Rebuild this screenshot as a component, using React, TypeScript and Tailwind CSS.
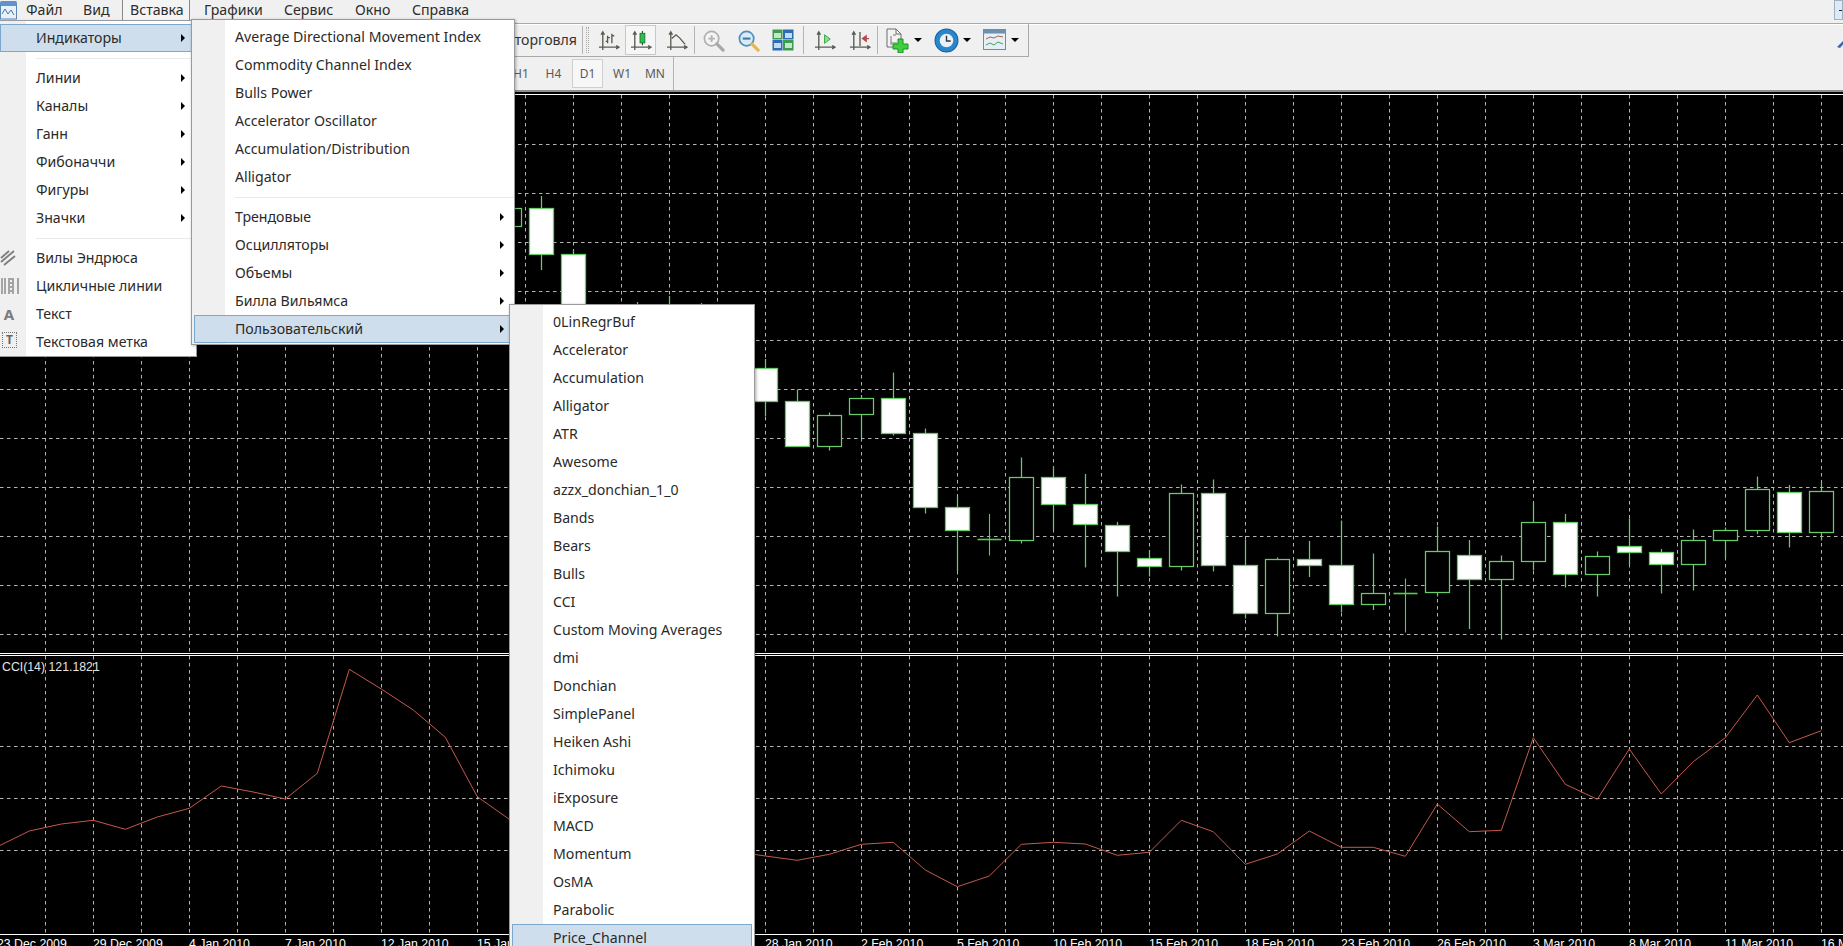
import React from "react";

const FONT = "[font-family:'Noto_Sans','Open_Sans',sans-serif]";

type C = [number, number, number, number, number, boolean];
// k index, wickTop, bodyTop, bodyBottom, wickBottom, white body
const candles: C[] = [
  [13, 200, 208.5, 226.5, 235, false],
  [14, 196, 208.5, 254.5, 270, true],
  [15, 250, 254.5, 330, 340, true],
  [17, 302, 320, 340, 350, false],
  [18, 296, 320, 340, 350, true],
  [19, 303, 320, 340, 350, false],
  [21, 359, 368.5, 401.5, 416.5, true],
  [22, 389.5, 401.5, 446.5, 447, true],
  [23, 412.5, 415.5, 446.5, 450.5, false],
  [24, 395, 398.5, 414.5, 438, false],
  [25, 372.5, 398.5, 433.5, 435.5, true],
  [26, 428.5, 433.5, 507.5, 513.5, true],
  [27, 496.5, 507.5, 530.5, 571.5, true],
  [28, 514, 539.5, 539.5, 555.5, false],
  [29, 457.5, 477.5, 540.5, 543.5, false],
  [30, 466.5, 477.5, 504.5, 530.5, true],
  [31, 474, 504.5, 524.5, 567.5, true],
  [32, 522, 525.5, 551.5, 596.5, true],
  [33, 550, 558.5, 566.5, 576.5, true],
  [34, 484.5, 493.5, 566.5, 570.5, false],
  [35, 479.5, 493.5, 565.5, 571.5, true],
  [36, 539.5, 565.5, 613.5, 618.5, true],
  [37, 557.5, 559.5, 613.5, 636.5, false],
  [38, 541, 559.5, 565.5, 577, true],
  [39, 520.5, 565.5, 604.5, 612.5, true],
  [40, 553.5, 593.5, 604.5, 610, false],
  [41, 578.5, 593.5, 593.5, 632.5, false],
  [42, 526.5, 551.5, 592.5, 596.5, false],
  [43, 540, 555.5, 579.5, 629, true],
  [44, 555.5, 561.5, 579.5, 639.5, false],
  [45, 502.5, 522.5, 561.5, 570.5, false],
  [46, 514, 522.5, 574.5, 587.5, true],
  [47, 551.5, 556.5, 574.5, 596.5, false],
  [48, 518.5, 546.5, 552.5, 564.5, true],
  [49, 549, 552.5, 564.5, 593.5, true],
  [50, 529.5, 540.5, 564.5, 590.5, false],
  [51, 527.5, 530.5, 540.5, 558.5, false],
  [52, 476.5, 489.5, 530.5, 534, false],
  [53, 485, 492.5, 532.5, 547.5, true],
  [54, 482, 491.5, 532.5, 540.5, false],
];

const cciLeft = "-2.7,846.7 29.3,831 61.3,824 93.3,820.3 125.3,829.3 157.3,817 189.3,808.3 221.3,786 253.3,792 285.3,799 317.3,773.3 349.3,669.3 381.3,689 413.3,710 445.3,737.3 477.3,796.7 509.3,819.3";
const cciRight = "755,854.5 765.3,856 797.3,860.3 829.3,854.3 861.3,844.3 893.3,842.3 925.3,870 957.3,886.7 989.3,876 1021.3,844.3 1053.3,842.3 1085.3,844 1117.3,855.3 1149.3,852.3 1181.3,820.3 1213.3,831.7 1245.3,864.3 1277.3,854 1309.3,831 1341.3,847.3 1373.3,847.3 1405.3,856.3 1437.3,804 1469.3,831.7 1501.3,830.3 1533.3,737.7 1565.3,784.3 1597.3,799.3 1629.3,749 1661.3,794 1693.3,761.7 1725.3,737.7 1757.3,695 1789.3,742.7 1821.3,730.7";

const verticals = Array.from({ length: 38 }, (_, i) => 45.5 + 48 * i);
const upperH = [144.5, 193.5, 242.5, 291.5, 340.5, 389.5, 438.5, 487.5, 536.5, 585.5, 634.5];
const lowerH = [746.5, 798.5, 850.5];

const dates = ["23 Dec 2009", "29 Dec 2009", "4 Jan 2010", "7 Jan 2010", "12 Jan 2010", "15 Jan 2010", "20 Jan 2010", "25 Jan 2010", "28 Jan 2010", "2 Feb 2010", "5 Feb 2010", "10 Feb 2010", "15 Feb 2010", "18 Feb 2010", "23 Feb 2010", "26 Feb 2010", "3 Mar 2010", "8 Mar 2010", "11 Mar 2010", "16 Mar 2010"];

function Grid({ hs, y1, y2 }: { hs: number[]; y1: number; y2: number }) {
  return (
    <g stroke="#b4b4b4" strokeWidth="1" strokeDasharray="3.5 3.5">
      {verticals.map((x) => <line key={x} x1={x} x2={x} y1={y1} y2={y2} />)}
      {hs.map((y) => <line key={y} x1={0} x2={1843} y1={y} y2={y} />)}
    </g>
  );
}

function Candle({ c }: { c: C }) {
  const [k, wt, bt, bb, wb, white] = c;
  const center = 93.5 + 32 * k;
  if (bt === bb) {
    return (
      <g stroke="#4fd04f" strokeWidth="1.1">
        <line x1={center} x2={center} y1={wt} y2={wb} />
        <line x1={center - 12} x2={center + 12} y1={bt} y2={bt} strokeWidth="1.6" />
      </g>
    );
  }
  return (
    <g stroke="#68cc68" strokeWidth="1.25">
      <line x1={center} x2={center} y1={wt} y2={wb} />
      <rect x={center - 12} y={bt} width={24} height={bb - bt} fill={white ? "#ffffff" : "#000000"} />
    </g>
  );
}

function Arrow() {
  return <span className="w-0 h-0 border-y-[4px] border-y-transparent border-l-[4px] border-l-black" />;
}

function Sep({ pad }: { pad: string }) {
  return (
    <div className={`h-[12px] flex items-center ${pad}`}>
      <div className="h-px w-full bg-[#e9e9e9]" />
    </div>
  );
}

function Item({ label, arrow, active, icon, textPad, arrowPad, mx }: { label: string; arrow?: boolean; active?: boolean; icon?: React.ReactNode; textPad: string; arrowPad?: string; mx?: string }) {
  return (
    <div className={`relative h-[28px] flex items-center justify-between ${textPad} ${arrowPad ?? ""} ${mx ?? ""} ${active ? "bg-[#cfdeec] outline outline-1 -outline-offset-1 outline-[#7ea8cb]" : ""}`}>
      {icon}
      <span className="text-[14.15px] leading-none text-[#2a2a2a] whitespace-nowrap">{label}</span>
      {arrow && <Arrow />}
    </div>
  );
}

function GutterIcon({ children }: { children: React.ReactNode }) {
  return (
    <svg viewBox="0 0 20 20" className="absolute left-0 top-[4px] w-[20px] h-[20px]" fill="none">
      {children}
    </svg>
  );
}

function Axes() {
  return (
    <path d="M5 2V21M3.2 5 5 2 6.8 5M1 18H22M19 16.2 22 18 19 19.8" stroke="#565c52" strokeWidth="1.4" fill="none" />
  );
}

function ToolSep() {
  return <div className="w-px h-[28px] bg-[#b4b4b4] shrink-0" />;
}

function Btn({ children, w, selected }: { children: React.ReactNode; w: string; selected?: boolean }) {
  return (
    <div className={`${w} h-[30px] flex items-center justify-center shrink-0 ${selected ? "bg-[#f6f6f6] border border-[#c8c8c8]" : ""}`}>
      {children}
    </div>
  );
}

function Drop() {
  return <span className="w-0 h-0 border-x-[4px] border-x-transparent border-t-[4px] border-t-black shrink-0" />;
}

function TF({ t, w, selected }: { t: string; w: string; selected?: boolean }) {
  return (
    <div className={`${w} h-[29px] flex items-center justify-center text-[12px] text-[#5a5a5a] shrink-0 ${selected ? "bg-[#f7f7f7] border border-[#cfcfcf]" : ""}`}>
      {t}
    </div>
  );
}

function MenuTop({ t, w, pl, active }: { t: string; w: string; pl: string; active?: boolean }) {
  return (
    <div className={`${w} ${pl} h-[20px] flex items-center text-[14.15px] text-[#2c2c2c] shrink-0 ${active ? "border-x border-[#8a8a8a] bg-[#f4f4f4]" : ""}`}>
      {t}
    </div>
  );
}

export default function App() {
  const custom = ["0LinRegrBuf", "Accelerator", "Accumulation", "Alligator", "ATR", "Awesome", "azzx_donchian_1_0", "Bands", "Bears", "Bulls", "CCI", "Custom Moving Averages", "dmi", "Donchian", "SimplePanel", "Heiken Ashi", "Ichimoku", "iExposure", "MACD", "Momentum", "OsMA", "Parabolic"];
  return (
    <div className={`relative w-[1843px] h-[946px] overflow-hidden bg-[#f0f0f0] flex flex-col ${FONT}`}>
      {/* menu bar */}
      <div className="h-[23px] flex items-start shrink-0">
        <svg viewBox="0 0 18 20" className="w-[18px] h-[20px] shrink-0">
          <rect x="0.5" y="3" width="16" height="16" fill="#e8f1fa" stroke="#5a86b5" />
          <rect x="0.5" y="1" width="16" height="5" fill="#5f93c9" />
          <path d="M2 14 5 9 8 14 11 10 14 15" stroke="#3f7d8f" strokeWidth="1" fill="none" />
        </svg>
        <MenuTop t="Файл" w="w-[57px]" pl="pl-[8px]" />
        <MenuTop t="Вид" w="w-[47px]" pl="pl-[8px]" />
        <MenuTop t="Вставка" w="w-[68px]" pl="pl-[7px]" active />
        <MenuTop t="Графики" w="w-[86px]" pl="pl-[14px]" />
        <MenuTop t="Сервис" w="w-[71px]" pl="pl-[8px]" />
        <MenuTop t="Окно" w="w-[57px]" pl="pl-[8px]" />
        <MenuTop t="Справка" w="w-[80px]" pl="pl-[8px]" />
        <div className="ml-auto w-[9px] h-[20px] bg-[#dde9f6] border border-[#9fb0c2] flex items-center justify-end">
          <div className="w-[3px] h-px bg-[#222]" />
        </div>
      </div>

      {/* toolbar row 1 */}
      <div className="h-[34px] shrink-0 border-t border-[#a9a9a9] shadow-[inset_0_1px_0_#ffffff] flex items-center relative">
        <div className="flex items-center h-full border-b border-r border-[#a9a9a9]">
          <div className="w-[577px] text-right text-[14.15px] text-[#333] whitespace-nowrap shrink-0">Автоторговля</div>
          <div className="ml-[5px]"><ToolSep /></div>
          <div className="ml-[3px] w-[3px] h-[26px] border-x border-dotted border-[#a8a8a8] shrink-0" />
          <div className="ml-[3px]" />
          <Btn w="w-[33px]">
            <svg viewBox="0 0 23 22" className="w-[22px] h-[21px]"><Axes /><path d="M10 6v8M10 8h2.5M10 12H8M14.5 4v10M14.5 6H17" stroke="#565c52" strokeWidth="1.4" fill="none" /></svg>
          </Btn>
          <Btn w="w-[31px]" selected>
            <svg viewBox="0 0 23 22" className="w-[22px] h-[21px]"><Axes /><path d="M13 1v15" stroke="#333" strokeWidth="1.1" /><rect x="10.5" y="3.5" width="5" height="10" fill="#27c24a" stroke="#1d7a36" /></svg>
          </Btn>
          <div className="w-[4px]" />
          <Btn w="w-[34px]">
            <svg viewBox="0 0 23 22" className="w-[22px] h-[21px]"><Axes /><path d="M6 9 10.5 5 14.5 8.5 20 15" stroke="#565c52" strokeWidth="1.4" fill="none" /></svg>
          </Btn>
          <ToolSep />
          <div className="w-[1px]" />
          <Btn w="w-[35px]">
            <svg viewBox="0 0 24 24" className="w-[23px] h-[23px]" fill="none"><circle cx="10" cy="10" r="7.5" fill="#f4f4f4" stroke="#b0b0b0" strokeWidth="1.8" /><path d="M6.5 10h7M10 6.5v7" stroke="#b4b4b4" strokeWidth="2" /><path d="M15.5 15.5 22 22" stroke="#a8a8a8" strokeWidth="3.4" strokeLinecap="round" /></svg>
          </Btn>
          <Btn w="w-[35px]">
            <svg viewBox="0 0 24 24" className="w-[23px] h-[23px]" fill="none"><circle cx="10" cy="10" r="7.5" fill="#d8ebf7" stroke="#4d8fbe" strokeWidth="1.8" /><path d="M6 10h8" stroke="#44789f" strokeWidth="2.2" /><path d="M15.5 15.5 22 22" stroke="#e2b855" strokeWidth="3.4" strokeLinecap="round" /></svg>
          </Btn>
          <Btn w="w-[34px]">
            <svg viewBox="0 0 22 22" className="w-[22px] h-[22px]"><rect x="0.5" y="0.5" width="10" height="10" fill="#3f9a52" /><rect x="11" y="0.5" width="10.5" height="10" fill="#2c6db5" /><rect x="0.5" y="11" width="10" height="10.5" fill="#2c6db5" /><rect x="11" y="11" width="10.5" height="10.5" fill="#3f9a52" /><rect x="2" y="4" width="7" height="5" fill="#c6e6c9" /><rect x="13" y="4" width="7" height="5" fill="#c4dcf2" /><rect x="2" y="14" width="7" height="5" fill="#c4dcf2" /><rect x="13" y="14" width="7" height="5" fill="#c6e6c9" /></svg>
          </Btn>
          <div className="w-[3px]" />
          <ToolSep />
          <div className="w-[3px]" />
          <Btn w="w-[35px]">
            <svg viewBox="0 0 23 22" className="w-[22px] h-[21px]"><Axes /><path d="M11 5v9l6-4.5z" fill="#8fdc8f" stroke="#3aa648" /></svg>
          </Btn>
          <Btn w="w-[35px]">
            <svg viewBox="0 0 23 22" className="w-[22px] h-[21px]"><Axes /><path d="M11.5 2v15" stroke="#565c52" strokeWidth="1.4" /><path d="M21 9h-5M18 6l-4 3 4 3z" stroke="#b5484a" strokeWidth="1.2" fill="#b5484a" /></svg>
          </Btn>
          <ToolSep />
          <div className="w-[5px]" />
          <Btn w="w-[27px]">
            <svg viewBox="0 0 26 26" className="w-[26px] h-[26px]"><path d="M3 2h9l5 5v13H3z" fill="#f3f3f3" stroke="#6d6d6d" /><path d="M12 2v5h5" fill="none" stroke="#6d6d6d" /><path d="M7 9v9M7 16h6M9 8h3" stroke="#777" strokeWidth="1" /><path d="M14 12h5v5h5v5h-5v4h-5v-4H9v-5h5z" fill="#3fcf3f" stroke="#1f8f2a" /></svg>
          </Btn>
          <div className="w-[4px]" /><Drop />
          <div className="w-[11px]" />
          <Btn w="w-[26px]">
            <svg viewBox="0 0 24 24" className="w-[25px] h-[25px]"><circle cx="12" cy="12" r="11" fill="#2b86c9" stroke="#155d98" /><circle cx="12" cy="12" r="6.5" fill="#e8f2f8" /><path d="M12 7.5V12.5H16" stroke="#333" strokeWidth="1.3" fill="none" /></svg>
          </Btn>
          <div className="w-[4px]" /><Drop />
          <div className="w-[11px]" />
          <Btn w="w-[25px]">
            <svg viewBox="0 0 24 22" className="w-[24px] h-[22px]"><rect x="0.5" y="0.5" width="22" height="20" fill="#e5f0f6" stroke="#6d8ca8" /><rect x="0.5" y="0.5" width="22" height="4" fill="#6a90b2" /><path d="M3 10l4-2 4 1 4-2 5 1" stroke="#a8643a" fill="none" /><path d="M3 16l4-2 4 2 4-3 5 2" stroke="#4d9a5b" fill="none" /></svg>
          </Btn>
          <div className="w-[4px]" /><Drop />
          <div className="w-[9px]" />
        </div>
        <div className="ml-auto w-[7px] h-[18px] overflow-hidden self-start mt-[8px]">
          <svg viewBox="0 0 16 16" className="w-[16px] h-[16px]"><path d="M1 15 8 8a4 4 0 0 1 5-6L10 5l1 2 3-2a4 4 0 0 1-5 5l-5 6z" fill="#3f62a8" /></svg>
        </div>
      </div>

      {/* toolbar row 2 */}
      <div className="h-[33px] shrink-0 flex items-center">
        <div className="w-[505px] shrink-0" />
        <TF t="H1" w="w-[32px]" />
        <TF t="H4" w="w-[33px]" />
        <div className="w-[2px]" />
        <TF t="D1" w="w-[31px]" selected />
        <div className="w-[3px]" />
        <TF t="W1" w="w-[32px]" />
        <div className="w-px" />
        <TF t="MN" w="w-[32px]" />
        <div className="ml-[2px] w-px h-full bg-[#b4b4b4]" />
      </div>

      {/* chart */}
      <div className="flex-1 min-h-0 bg-black flex flex-col border-t-2 border-[#8f8f8f]">
        <div className="h-[2px] shrink-0" />
        <div className="h-px bg-white shrink-0" />
        <svg viewBox="0 95 1843 558" className="w-[1843px] h-[558px] shrink-0 block">
          <Grid hs={upperH} y1={95} y2={653} />
          {candles.map((c) => <Candle key={c[0]} c={c} />)}
        </svg>
        <div className="h-[3px] shrink-0 border-y border-white" />
        <div className="relative h-[278px] shrink-0">
          <svg viewBox="0 656 1843 278" className="w-[1843px] h-[278px] block">
            <Grid hs={lowerH} y1={656} y2={934} />
            <polyline points={cciLeft} fill="none" stroke="#c4594c" strokeWidth="1" />
            <polyline points={cciRight} fill="none" stroke="#c4594c" strokeWidth="1" />
          </svg>
          <div className="absolute left-[2px] top-[3px] text-[12.3px] leading-[16px] text-[#e4e4e4] whitespace-nowrap [font-family:'Liberation_Sans',sans-serif]">CCI(14) 121.1821</div>
        </div>
        <div className="h-px bg-white shrink-0" />
        <div className="flex-1 flex -ml-[3px] overflow-hidden">
          {dates.map((d) => (
            <div key={d} className="w-[96px] shrink-0 flex flex-col">
              <div className="w-px h-[3px] bg-white -mb-[3px]" />
              <span className="mt-[4px] text-[12.3px] leading-[16px] text-white whitespace-nowrap [font-family:'Liberation_Sans',sans-serif]">{d}</span>
            </div>
          ))}
        </div>
      </div>

      {/* first menu */}
      <div className="absolute left-0 top-[20px] w-[197px] h-[337px] border-t border-r border-b border-[#9a9a9a] pt-[3px] bg-[linear-gradient(to_right,#f0f0f0_26px,#ffffff_26px)] shadow-[2px_2px_3px_rgba(0,0,0,0.4)]">
        <Item label="Индикаторы" arrow active textPad="pl-[36px]" arrowPad="pr-[11px]" />
        <Sep pad="pl-[36px]" />
        {["Линии", "Каналы", "Ганн", "Фибоначчи", "Фигуры", "Значки"].map((t) => (
          <Item key={t} label={t} arrow textPad="pl-[36px]" arrowPad="pr-[11px]" />
        ))}
        <Sep pad="pl-[36px]" />
        <Item label="Вилы Эндрюса" textPad="pl-[36px]" icon={
          <GutterIcon><path d="M1 10 9 3M1 14 14 3M4 17 15 8" stroke="#7c7c7c" strokeWidth="1.8" /></GutterIcon>
        } />
        <Item label="Цикличные линии" textPad="pl-[36px]" icon={
          <GutterIcon><path d="M2 2v16M5 2v16M9 2v16M13 2v16M18 2v16" stroke="#7c7c7c" strokeWidth="1.3" /><path d="M11 2v16" stroke="#7c7c7c" strokeWidth="1.3" strokeDasharray="2 2" /></GutterIcon>
        } />
        <Item label="Текст" textPad="pl-[36px]" icon={
          <span className="absolute left-[3px] top-[4px] text-[15px] font-bold text-[#7b7b7b] leading-[20px] w-[12px] text-center">A</span>
        } />
        <Item label="Текстовая метка" textPad="pl-[36px]" icon={
          <span className="absolute left-[2px] top-[4px] w-[15px] h-[16px] border border-dotted border-[#777] text-[12px] font-bold text-[#666] leading-[14px] text-center">T</span>
        } />
      </div>

      {/* second menu */}
      <div className="absolute left-[191px] top-[19px] w-[324px] h-[326px] border border-[#9a9a9a] pt-[3px] bg-[linear-gradient(to_right,#f0f0f0_33px,#ffffff_33px)] shadow-[1px_1px_3px_rgba(0,0,0,0.3)]">
        {["Average Directional Movement Index", "Commodity Channel Index", "Bulls Power", "Accelerator Oscillator", "Accumulation/Distribution", "Alligator"].map((t) => (
          <Item key={t} label={t} textPad="pl-[43px]" />
        ))}
        <Sep pad="pl-[43px]" />
        {["Трендовые", "Осцилляторы", "Объемы", "Билла Вильямса"].map((t) => (
          <Item key={t} label={t} arrow textPad="pl-[43px]" arrowPad="pr-[10px]" />
        ))}
        <Item label="Пользовательский" arrow active textPad="pl-[41px]" arrowPad="pr-[8px]" mx="mx-[2px]" />
      </div>

      {/* third menu */}
      <div className="absolute left-[509px] top-[304px] w-[246px] h-[660px] border border-[#9a9a9a] pt-[3px] bg-[linear-gradient(to_right,#f0f0f0_33px,#ffffff_33px)] shadow-[1px_1px_3px_rgba(0,0,0,0.35)]">
        {custom.map((t) => <Item key={t} label={t} textPad="pl-[43px]" />)}
        <Item label="Price_Channel" active textPad="pl-[41px]" mx="mx-[2px]" />
      </div>
    </div>
  );
}
